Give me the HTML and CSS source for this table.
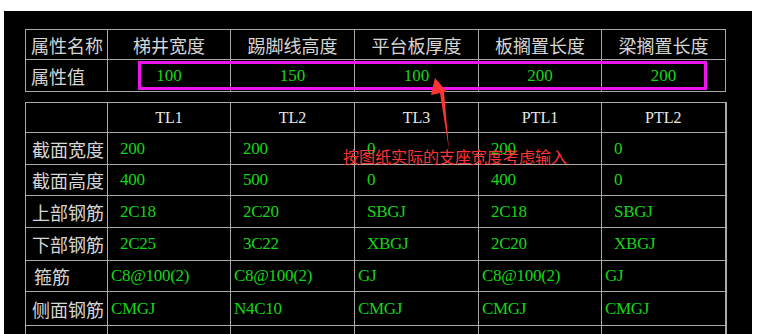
FILE: index.html
```html
<!DOCTYPE html>
<html lang="zh-CN">
<head>
<meta charset="UTF-8">
<meta name="viewport" content="width=device-width, initial-scale=1.0">
<title>楼梯参数</title>
<link rel="stylesheet" href="styles.css">
</head>
<body>

<div class="panel">
    <!-- 楼梯属性 -->
    <table class="grid attr-table">
        <colgroup>
            <col class="c-label"><col class="c1"><col class="c2"><col class="c3"><col class="c4"><col class="c5">
        </colgroup>
        <tr class="row-head">
            <td class="label">属性名称</td>
            <td class="head">梯井宽度</td>
            <td class="head">踢脚线高度</td>
            <td class="head">平台板厚度</td>
            <td class="head">板搁置长度</td>
            <td class="head">梁搁置长度</td>
        </tr>
        <tr class="row-value">
            <td class="label">属性值</td>
            <td class="num">100</td>
            <td class="num">150</td>
            <td class="num">100</td>
            <td class="num">200</td>
            <td class="num">200</td>
        </tr>
    </table>

    <!-- 梯梁参数 -->
    <table class="grid beam-table">
        <colgroup>
            <col class="c-label"><col class="c1"><col class="c2"><col class="c3"><col class="c4"><col class="c5">
        </colgroup>
        <tr class="r-head">
            <td></td>
            <td class="name">TL1</td>
            <td class="name">TL2</td>
            <td class="name">TL3</td>
            <td class="name">PTL1</td>
            <td class="name">PTL2</td>
        </tr>
        <tr class="r1">
            <td class="label">截面宽度</td>
            <td class="val">200</td><td class="val">200</td><td class="val">0</td><td class="val">200</td><td class="val">0</td>
        </tr>
        <tr class="r2">
            <td class="label">截面高度</td>
            <td class="val">400</td><td class="val">500</td><td class="val">0</td><td class="val">400</td><td class="val">0</td>
        </tr>
        <tr class="r3">
            <td class="label">上部钢筋</td>
            <td class="val">2C18</td><td class="val">2C20</td><td class="val">SBGJ</td><td class="val">2C18</td><td class="val">SBGJ</td>
        </tr>
        <tr class="r4">
            <td class="label">下部钢筋</td>
            <td class="val">2C25</td><td class="val">3C22</td><td class="val">XBGJ</td><td class="val">2C20</td><td class="val">XBGJ</td>
        </tr>
        <tr class="r5 tight">
            <td class="label indent">箍筋</td>
            <td class="val">C8@100(2)</td><td class="val">C8@100(2)</td><td class="val">GJ</td><td class="val">C8@100(2)</td><td class="val">GJ</td>
        </tr>
        <tr class="r6 tight">
            <td class="label">侧面钢筋</td>
            <td class="val">CMGJ</td><td class="val">N4C10</td><td class="val">CMGJ</td><td class="val">CMGJ</td><td class="val">CMGJ</td>
        </tr>
        <tr class="r7 tight">
            <td class="label">拉筋</td>
            <td></td><td></td><td></td><td></td><td></td>
        </tr>
    </table>

    <!-- 标注：选框、箭头、说明 -->
    <div class="mark-box"></div>
    <svg class="mark-arrow" width="30" height="80" viewBox="0 0 30 80">
        <polygon points="6,1 18,15 15,15 20,73 11,16 2,18" fill="#ff3535"/>
    </svg>
    <div class="mark-note">按图纸实际的支座宽度考虑输入</div>
</div>

</body>
</html>
```

FILE: styles.css
```css
/* 全体 */
html, body {
    margin: 0;
    height: 100%;
    overflow: hidden;
    background-color: #fff;
}

.panel {
    position: relative;
    margin: 11px 6px 0 4px;
    height: 323px;
    background-color: #000;
    padding: 18px 0 0 21px;
    box-sizing: border-box;
    overflow: hidden;
}

/* 表格共通 */
.grid {
    border-collapse: collapse;
    table-layout: fixed;
    width: 701px;
}
.grid td {
    border: 1px solid #a9a9a9;
    padding: 0;
    white-space: nowrap;
    overflow: hidden;
}
.c-label { width: 82px; }
.c1 { width: 123px; }
.c2 { width: 124px; }
.c3 { width: 124px; }
.c4 { width: 123px; }
.c5 { width: 124px; }

.label {
    font-family: "Noto Sans CJK SC", "Liberation Sans", sans-serif;
    font-size: 18px;
    color: #d6d6d6;
    padding-left: 5px !important;
    line-height: 20px;
}

/* 属性表 */
.attr-table {
    border: 1px solid #e0e0e0;
}
.attr-table .row-head td { height: 29px; }
.attr-table .row-value td { height: 31px; }
.head {
    font-family: "Noto Sans CJK SC", "Liberation Sans", sans-serif;
    font-size: 18px;
    color: #d6d6d6;
    text-align: center;
    line-height: 20px;
}
.num {
    font-family: "Liberation Serif", serif;
    font-size: 17px;
    color: #16d616;
    text-align: center;
}

/* 梯梁表 */
.beam-table {
    margin-top: 10px;
    border-right: 2px solid #a9a9a9;
}
.beam-table .label { padding-left: 6px !important; }
.beam-table .indent { padding-left: 8px !important; }
.name {
    font-family: "Liberation Serif", serif;
    font-size: 16px;
    color: #e8e8e8;
    text-align: center;
}
.val {
    font-family: "Liberation Serif", serif;
    font-size: 17px;
    color: #16d616;
    padding-left: 12px !important;
    letter-spacing: -0.3px;
}
.tight .val { padding-left: 3px !important; }

.r-head td { height: 29px; }
.r1 td { height: 31px; }
.r2 td { height: 30px; }
.r3 td { height: 31px; }
.r4 td { height: 32px; }
.r5 td { height: 30px; }
.r6 td { height: 33px; border-top-color: #f0f0f0; }
.r7 td { height: 33px; }

/* 标注 */
.mark-box {
    position: absolute;
    left: 134px;
    top: 50px;
    width: 569px;
    height: 29px;
    border: 3px solid #ee14ee;
    box-sizing: border-box;
}
.mark-arrow {
    position: absolute;
    left: 425px;
    top: 66px;
}
.mark-note {
    position: absolute;
    left: 339px;
    top: 136px;
    font-family: "Noto Sans CJK SC", "Liberation Sans", sans-serif;
    font-size: 16px;
    line-height: 18px;
    color: #ff3535;
    white-space: nowrap;
}
```
